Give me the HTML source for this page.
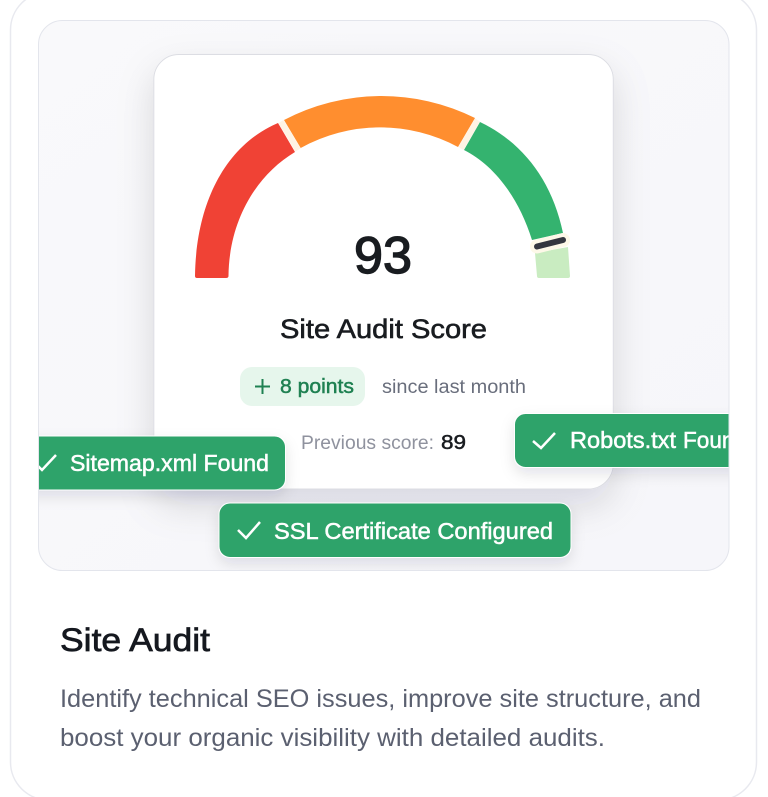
<!DOCTYPE html>
<html lang="en">
<head>
<meta charset="utf-8">
<title>Site Audit</title>
<style>
html,body{margin:0;padding:0;background:#fff;width:768px;height:797px;overflow:hidden}
svg{display:block}
text{font-family:"Liberation Sans",sans-serif;white-space:pre}
</style>
</head>
<body>
<svg xmlns="http://www.w3.org/2000/svg" width="768" height="797" viewBox="0 0 768 797">
<defs>
<linearGradient id="panelG" x1="0" y1="0" x2="1" y2="1"><stop offset="0" stop-color="#f9f9fb"/><stop offset="1" stop-color="#f6f6fa"/></linearGradient>
<filter id="cardS" x="-30%" y="-30%" width="160%" height="170%"><feDropShadow dx="0" dy="16" stdDeviation="18" flood-color="#1a1d2e" flood-opacity=".13"/></filter>
<filter id="badgeS" x="-20%" y="-50%" width="140%" height="220%"><feDropShadow dx="0" dy="6" stdDeviation="7" flood-color="#1a1d2e" flood-opacity=".11"/></filter>
<clipPath id="panelClip"><rect x="39" y="21" width="689.5" height="549" rx="23"/></clipPath>
</defs>

<rect x="10.5" y="-8" width="746" height="808" rx="38" fill="#fff" stroke="#e8e9ef" stroke-width="1.5"/>
<rect x="38.5" y="20.5" width="690.5" height="550" rx="24" fill="url(#panelG)" stroke="#e3e5ec" stroke-width="1"/>

<g clip-path="url(#panelClip)">
  <rect x="153.8" y="54.5" width="459.500" height="434.500" rx="25" fill="#fff" stroke="#dcdde3" stroke-width="1" filter="url(#cardS)"/>

  <!-- gauge -->
  <path d="M195 276 C196 205 224 146 278 123 L295 152 C255 176 229 222 228.500 276 Q228.500 278 226 278 L197 278 Q195 278 195 276Z" fill="#f04235"/>
  <path d="M284 120 A210 210 0 0 1 475 118 L458 147 A164 164 0 0 0 300.700 148Z" fill="#ff8e2f"/>
  <path d="M480 122 C522 142 552 180 563 233 L532 240 C518 195 492 164 464 150Z" fill="#34b36f"/>
  <path d="M568 247 L570 276 Q570 278 568 278 L539 278 Q537 278 537 276 L535 253Z" fill="#c9ecc1"/>
  <path d="M281 121.500 L298 150" stroke="#fff3e4" stroke-width="6" fill="none"/>
  <path d="M477.500 120 L461 148.500" stroke="#fff3e4" stroke-width="6" fill="none"/>
  <path d="M537 246.500 L563 240" stroke="#fdf8e8" stroke-width="14" stroke-linecap="round" fill="none"/>
  <path d="M537 246.500 L563 240" stroke="#34363f" stroke-width="6" stroke-linecap="round" fill="none"/>

  <text x="354" y="273" font-size="52" fill="#191c20" stroke="#191c20" stroke-width="1.400" textLength="58" lengthAdjust="spacingAndGlyphs">93</text>
  <text x="280" y="338" font-size="27" fill="#191c20" stroke="#191c20" stroke-width=".6" textLength="207" lengthAdjust="spacingAndGlyphs">Site Audit Score</text>

  <rect x="240" y="367" width="125" height="39" rx="12" fill="#e6f6ec"/>
  <path d="M255 386.500 H270 M262.500 379 V394" stroke="#1f8152" stroke-width="2" fill="none"/>
  <text x="280" y="393" font-size="20" fill="#1f8152" stroke="#1f8152" stroke-width=".5" textLength="74" lengthAdjust="spacingAndGlyphs">8 points</text>
  <text x="382" y="393" font-size="19" fill="#696e7c" textLength="144" lengthAdjust="spacingAndGlyphs">since last month</text>
  <text x="301" y="449" font-size="19" fill="#8f929e" textLength="133" lengthAdjust="spacingAndGlyphs">Previous score:</text>
  <text x="441" y="449" font-size="20" fill="#191c20" stroke="#191c20" stroke-width=".5" textLength="25" lengthAdjust="spacingAndGlyphs">89</text>

  <!-- Sitemap badge -->
  <rect x="20" y="436" width="265.500" height="54" rx="11" fill="#2fa36b" stroke="#fff" stroke-width="1" filter="url(#badgeS)"/>
  <path d="M34 462 L42 470 L56 455" stroke="#fff" stroke-width="2.500" fill="none"/>
  <text x="70" y="471" font-size="23" fill="#fff" stroke="#fff" stroke-width=".5" textLength="199" lengthAdjust="spacingAndGlyphs">Sitemap.xml Found</text>

  <!-- Robots badge -->
  <rect x="514.500" y="413.500" width="260" height="54" rx="11" fill="#2fa36b" stroke="#fff" stroke-width="1" filter="url(#badgeS)"/>
  <path d="M533 441 L541 448 L555 433" stroke="#fff" stroke-width="2.500" fill="none"/>
  <text x="570" y="448" font-size="23" fill="#fff" stroke="#fff" stroke-width=".5" textLength="106" lengthAdjust="spacingAndGlyphs">Robots.txt</text>
  <text x="683" y="448" font-size="23" fill="#fff" stroke="#fff" stroke-width=".5" textLength="64" lengthAdjust="spacingAndGlyphs">Found</text>

  <!-- SSL badge -->
  <rect x="219" y="503" width="352" height="54.500" rx="11" fill="#2fa36b" stroke="#fff" stroke-width="1" filter="url(#badgeS)"/>
  <path d="M238 530 L246 538 L260 522" stroke="#fff" stroke-width="2.500" fill="none"/>
  <text x="274" y="539" font-size="23" fill="#fff" stroke="#fff" stroke-width=".5" textLength="279" lengthAdjust="spacingAndGlyphs">SSL Certificate Configured</text>
</g>

<text x="60" y="651" font-size="32" fill="#15181f" stroke="#15181f" stroke-width=".7" textLength="150" lengthAdjust="spacingAndGlyphs">Site Audit</text>
<text x="60" y="707" font-size="25" fill="#5b6070" textLength="641" lengthAdjust="spacingAndGlyphs">Identify technical SEO issues, improve site structure, and</text>
<text x="60" y="746" font-size="25" fill="#5b6070" textLength="545" lengthAdjust="spacingAndGlyphs">boost your organic visibility with detailed audits.</text>
</svg>
</body>
</html>
